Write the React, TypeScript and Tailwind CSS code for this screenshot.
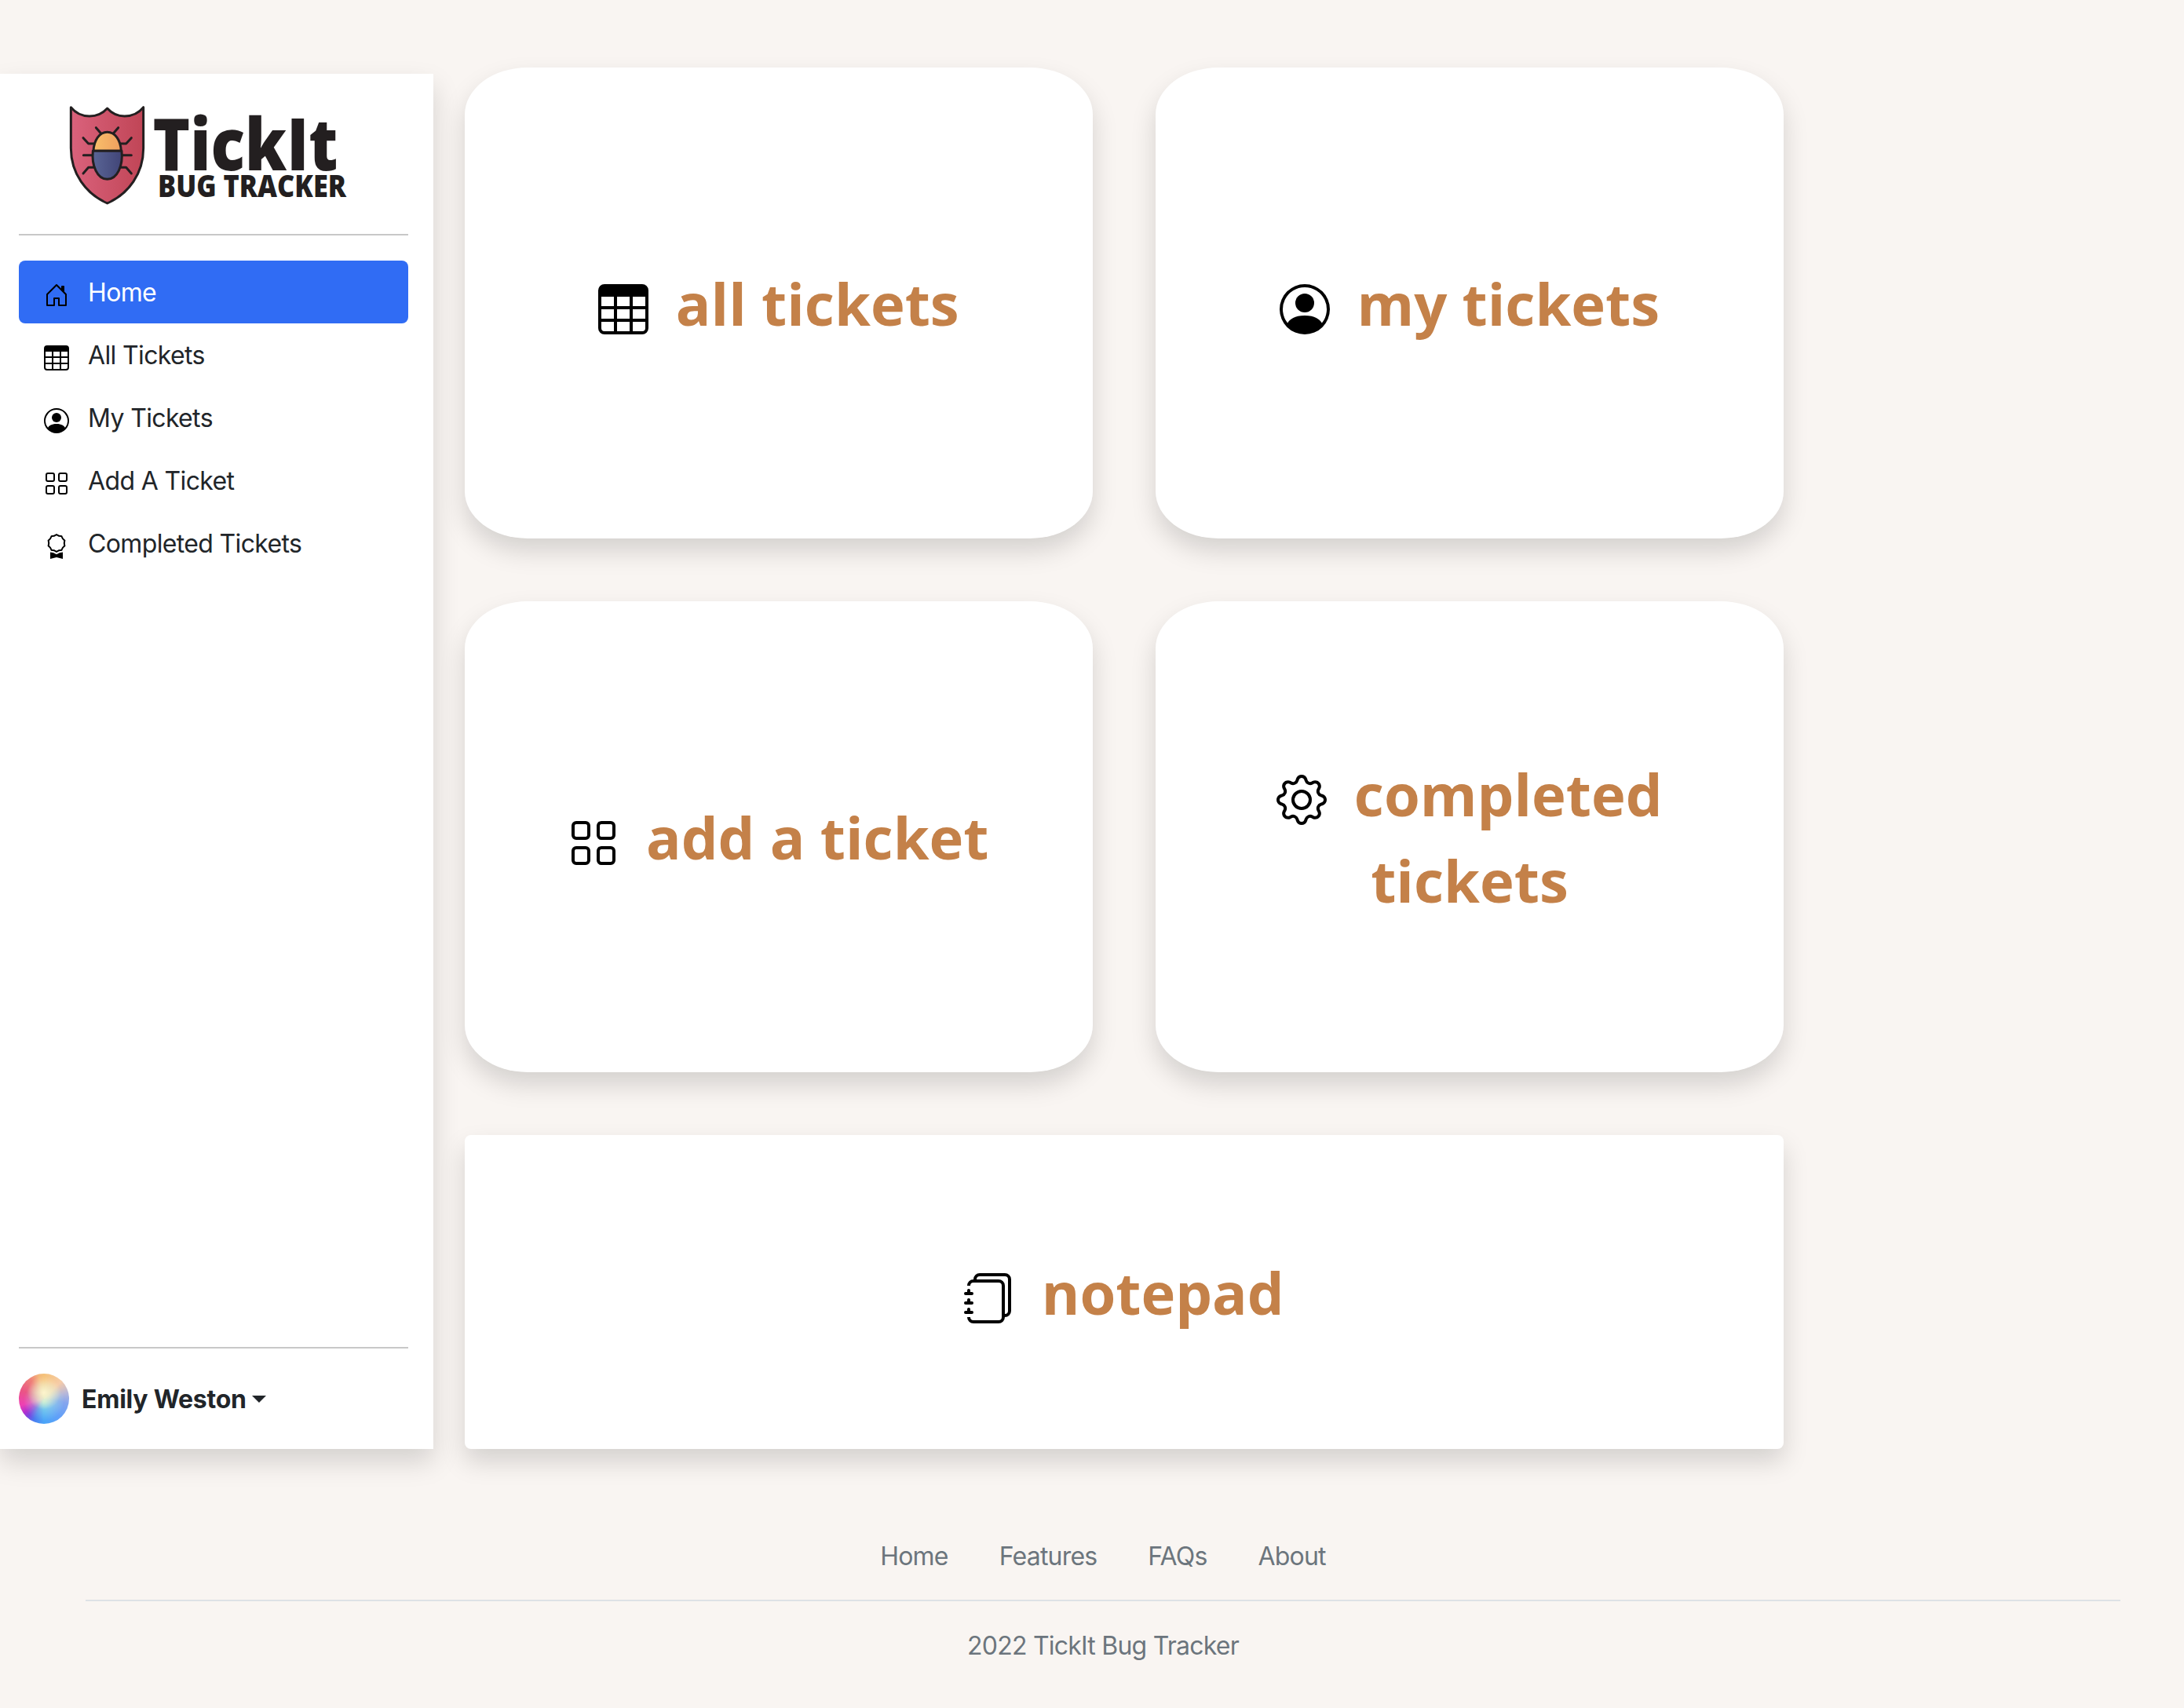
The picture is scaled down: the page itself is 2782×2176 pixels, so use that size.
import type { ReactNode } from "react";
import type { IconType } from "react-icons";
import {
  BsAward,
  BsGear,
  BsGrid,
  BsHouseDoor,
  BsJournals,
  BsPersonCircle,
  BsTable,
} from "react-icons/bs";

const navItems: { label: string; icon: IconType; active?: boolean }[] = [
  { label: "Home", icon: BsHouseDoor, active: true },
  { label: "All Tickets", icon: BsTable },
  { label: "My Tickets", icon: BsPersonCircle },
  { label: "Add A Ticket", icon: BsGrid },
  { label: "Completed Tickets", icon: BsAward },
];

function Logo() {
  return (
    <svg
      viewBox="0 0 376 132"
      className="ml-[85px] h-[132px] w-[376px] shrink-0 overflow-visible"
      role="img"
      aria-label="TickIt Bug Tracker"
    >
      <defs>
        <linearGradient id="shield" x1="0" x2="1" y1="0" y2="0">
          <stop offset="0" stopColor="#da627c" />
          <stop offset="1" stopColor="#c04556" />
        </linearGradient>
        <linearGradient id="head" x1="0" x2="1" y1="0" y2="0">
          <stop offset="0" stopColor="#f9bf6b" />
          <stop offset="1" stopColor="#ee9f5e" />
        </linearGradient>
        <linearGradient id="body" x1="0" x2="1" y1="0" y2="0">
          <stop offset="0" stopColor="#5a6596" />
          <stop offset="1" stopColor="#414577" />
        </linearGradient>
      </defs>
      <g transform="translate(-5 -6) scale(.33333)" stroke="#231f20" strokeWidth="9" strokeLinecap="round" strokeLinejoin="round">
        <path
          d="M31 32C50 56 76 66 102 66C128 66 152 56 170 36C188 56 210 66 236 66C262 66 289 56 308 32V188C308 285 252 362 170 399C88 362 31 285 31 188Z"
          fill="url(#shield)"
        />
        <path
          d="M127 110L146 132M212 110L193 132M78 149L98 171H121M262 149L242 171H219M79 215H113M262 215H227M78 285L98 262H117M262 285L242 262H223"
          fill="none"
        />
        <path d="M117 199C119 158 140 127 170 127C200 127 221 158 223 199Z" fill="url(#head)" />
        <path d="M115 199H225C231 255 208 307 170 307C132 307 109 255 115 199Z" fill="url(#body)" />
      </g>
      <g fill="#231f20" className="font-['Open_Sans'] font-extrabold">
        <text x="109.5" y="84.6" fontSize="92" textLength="236" lengthAdjust="spacingAndGlyphs">
          TickIt
        </text>
        <text x="116" y="119" fontSize="38.7" textLength="240" lengthAdjust="spacingAndGlyphs">
          BUG TRACKER
        </text>
      </g>
    </svg>
  );
}

function Sidebar() {
  return (
    <aside className="mt-[94px] flex h-[1752px] w-[552px] shrink-0 flex-col bg-white pt-[38px] pr-8 pb-8 pl-6 shadow-[0_16px_32px_rgba(0,0,0,0.15)]">
      <div className="-ml-6 flex h-[166px]">
        <Logo />
      </div>
      <div className="h-[2px] bg-[#c8c8c8]" />
      <nav className="mt-8 flex flex-1 flex-col">
        {navItems.map(({ label, icon: Icon, active }) => (
          <a
            key={label}
            className={
              active
                ? "flex h-20 items-center gap-6 rounded-lg bg-[#306cf4] px-8 text-white"
                : "flex h-20 items-center gap-6 rounded-lg px-8 text-[#212529]"
            }
          >
            <Icon className="mt-2 size-8 text-black" />
            <span className="mt-0.5 text-[32px] leading-[48px] tracking-[-0.02em]">{label}</span>
          </a>
        ))}
      </nav>
      <div className="h-[2px] bg-[#c8c8c8]" />
      <div className="mt-8 flex items-center text-[#212529]">
        <span className="size-16 rounded-full bg-[radial-gradient(circle_at_50%_38%,rgba(253,244,205,1)_0%,rgba(253,240,200,0.6)_18%,rgba(253,240,200,0)_42%),radial-gradient(circle_at_50%_54%,rgba(180,250,220,0.9)_0%,rgba(170,245,225,0.45)_22%,rgba(170,245,225,0)_55%),conic-gradient(#f5c27a_0deg,#f6cca8_45deg,#b9b8d8_75deg,#85a5ee_100deg,#62a0f8_140deg,#4aa5f8_180deg,#4a7cf0_205deg,#7a45e0_222deg,#b030d0_234deg,#ee40b4_254deg,#ea5585_290deg,#ee8078_325deg,#f3b87c_347deg,#f5c27a_360deg)]" />
        <span className="mt-0.5 ml-4 text-[32px] leading-[48px] font-bold tracking-[-0.25px]">Emily Weston</span>
        <span className="ml-[7px] border-x-[9.6px] border-t-[9.6px] border-x-transparent border-t-[#212529]" />
      </div>
    </aside>
  );
}

function CardLine({ icon: Icon, children }: { icon?: IconType; children: ReactNode }) {
  return (
    <div className="flex h-[110px] items-center justify-center">
      {Icon && <Icon className="mt-4 mr-[34.5px] size-16 shrink-0 text-black" />}
      <span className="mt-0.5">{children}</span>
    </div>
  );
}

function Card({ wide, children }: { wide?: boolean; children: ReactNode }) {
  return (
    <section
      className={
        wide
          ? "col-span-2 flex h-[400px] flex-col justify-center rounded-lg bg-white shadow-[0_16px_32px_rgba(0,0,0,0.15)]"
          : "flex h-[600px] flex-col justify-center rounded-[10%] bg-white shadow-[0_16px_32px_rgba(0,0,0,0.15)]"
      }
    >
      {children}
    </section>
  );
}

export default function App() {
  return (
    <div className="min-h-[2176px] w-[2782px] overflow-hidden bg-[#f9f5f2] font-['Inter',sans-serif]">
      <div className="flex items-start">
        <Sidebar />
        <main className="mt-[86px] ml-10 grid grid-cols-[800px_800px] gap-20 font-['Open_Sans',sans-serif] text-[74.1px] leading-[110px] font-bold text-[#c48149]">
          <Card>
            <CardLine icon={BsTable}>all tickets</CardLine>
          </Card>
          <Card>
            <CardLine icon={BsPersonCircle}>my tickets</CardLine>
          </Card>
          <Card>
            <CardLine icon={BsGrid}>add a ticket</CardLine>
          </Card>
          <Card>
            <CardLine icon={BsGear}>completed</CardLine>
            <CardLine>tickets</CardLine>
          </Card>
          <Card wide>
            <CardLine icon={BsJournals}>notepad</CardLine>
          </Card>
        </main>
      </div>
      <footer className="mt-28 ml-[109px] w-[2592px] text-[32px] leading-[48px] text-[#6c757d]">
        <nav className="flex h-[82px] justify-center gap-[65px] border-b-2 border-[#dee2e6] pt-px tracking-[-0.025em]">
          <a>Home</a>
          <a>Features</a>
          <a>FAQs</a>
          <a>About</a>
        </nav>
        <p className="mt-[33px] text-center tracking-[-0.77px]">2022 TickIt Bug Tracker</p>
      </footer>
    </div>
  );
}
